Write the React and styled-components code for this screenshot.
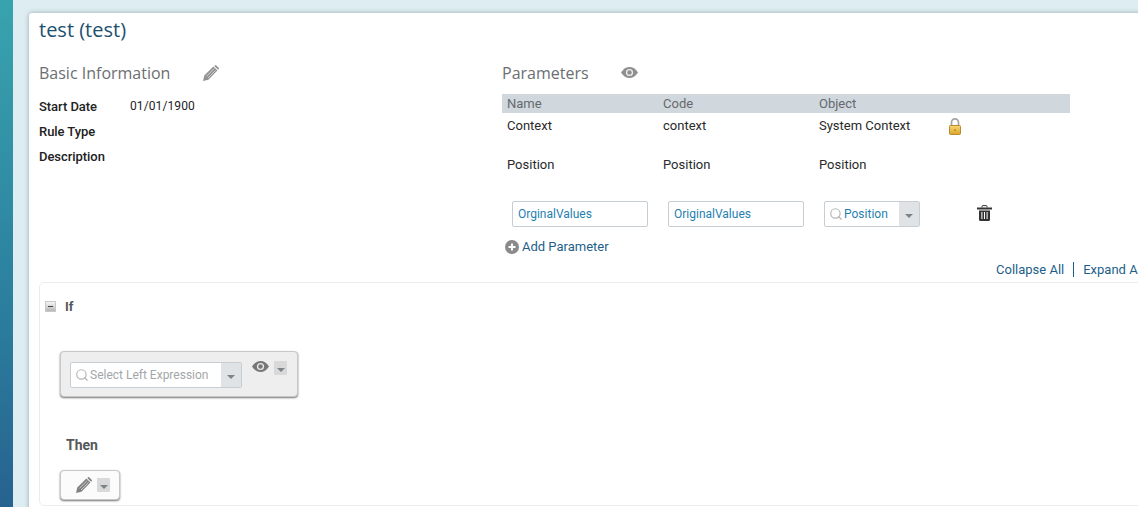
import React from 'react';
import styled, { createGlobalStyle } from 'styled-components';
import { Search } from 'lucide-react';

const GlobalStyle = createGlobalStyle`
  html, body {
    margin: 0;
    padding: 0;
    height: 100%;
    overflow: hidden;
    background: #deedf1;
    font-family: Roboto, "Liberation Sans", sans-serif;
  }
`;

const Page = styled.div`
  display: flex;
  width: 1138px;
  height: 507px;
  overflow: hidden;
`;

const Strip = styled.div`
  flex: 0 0 13px;
  background: linear-gradient(180deg, #38a3ae 0%, #2b7f9e 60%, #27628f 100%);
`;

const Main = styled.div`
  flex: 0 0 1180px;
  padding: 13px 0 0 16px;
`;

const Card = styled.div`
  background: #fff;
  border-radius: 3px 0 0 0;
  box-shadow: 0 0 5px rgba(60, 90, 100, 0.45);
  padding: 4px 0 0 10px;
  height: 520px;
  box-sizing: border-box;
`;

const Title = styled.h1`
  margin: 0;
  font: 400 20px/25px "Open Sans", sans-serif;
  color: #20506f;
`;

const Columns = styled.div`
  display: flex;
  margin-top: 20px;
  height: 199px;
`;

const LeftCol = styled.div`
  flex: 0 0 463px;
`;

const RightCol = styled.div`
  flex: 0 0 568px;
`;

const SectionHead = styled.div`
  display: flex;
  align-items: center;
  height: 22px;
  gap: ${(p) => p.$gap}px;
`;

const SectionTitle = styled.h2`
  margin: 0;
  font: 400 16px/22px "Open Sans", sans-serif;
  color: #6b6f73;
`;

const RaisedIcon = styled.span`
  display: block;
  margin-top: -2px;
`;

const InfoList = styled.div`
  display: flex;
  flex-direction: column;
  margin-top: 15px;
`;

const InfoRow = styled.div`
  display: flex;
  height: 25px;
  font-size: 13px;
  line-height: 15px;
  letter-spacing: -0.05px;
  color: #222;
`;

const InfoLabel = styled.div`
  flex: 0 0 91px;
  font-weight: 500;
`;

const InfoValue = styled.div`
  font-size: 12px;
  letter-spacing: 0.1px;
`;

const ParamGrid = styled.div`
  display: grid;
  grid-template-columns: 156px 156px 128px 1fr;
`;

const HeadCell = styled.div`
  background: #d0d7dd;
  height: 19px;
  margin-top: 10px;
  padding-left: 5px;
  font-size: 13px;
  line-height: 19px;
  color: #66696c;
`;

const Cell = styled.div`
  height: ${(p) => p.$height}px;
  padding-left: 5px;
  font-size: 13px;
  line-height: 26px;
  color: #2a2a2a;
`;

const LockWrap = styled.div`
  padding: 5px 0 0 1px;
`;

const EditRow = styled.div`
  display: flex;
  align-items: center;
  margin-top: 10px;
  padding-left: 10px;
`;

const TextBox = styled.div`
  box-sizing: border-box;
  width: 136px;
  height: 26px;
  margin-right: 20px;
  padding-left: 5px;
  border: 1px solid #c6ced3;
  border-radius: 2px;
  font-size: 12px;
  line-height: 24px;
  color: #1f7fb0;
`;

const Combo = styled.div`
  box-sizing: border-box;
  display: flex;
  align-items: center;
  width: ${(p) => p.$width}px;
  height: 26px;
  padding-left: 4px;
  gap: 1px;
  background: #fff;
  border: 1px solid #c6ced3;
  border-radius: 2px;
  font-size: 12px;
  color: ${(p) => (p.$muted ? '#a3a6a8' : '#1f7fb0')};
`;

const ComboText = styled.span`
  flex: 1;
  white-space: nowrap;
`;

const ComboArrow = styled.span`
  flex: 0 0 20px;
  align-self: stretch;
  display: flex;
  align-items: center;
  justify-content: center;
  background: #dfe3e6;
`;

const Caret = styled.i`
  display: block;
  margin-top: 3px;
  border: 4px solid transparent;
  border-bottom: 0;
  border-top-color: #7d8488;
`;

const TrashWrap = styled.span`
  display: flex;
  margin-left: 57px;
  margin-top: -2px;
`;

const AddLink = styled.div`
  display: flex;
  align-items: center;
  gap: 3px;
  margin: 11px 0 0 3px;
  font-size: 13px;
  line-height: 18px;
  color: #1d5f8a;
`;

const LinksRow = styled.div`
  display: flex;
  align-items: center;
  height: 16px;
  margin-left: 957px;
  font-size: 13px;
  color: #1d5f8a;
  white-space: nowrap;
`;

const LinkSep = styled.span`
  width: 1px;
  height: 15px;
  margin: 0 9px 0 9px;
  background: #1d5f8a;
`;

const RulePanel = styled.div`
  box-sizing: border-box;
  height: 224px;
  margin-top: 5px;
  padding: 16px 0 0 5px;
  border: 1px solid #ebeded;
  border-radius: 5px;
`;

const RuleHead = styled.div`
  display: flex;
  align-items: center;
  gap: 9px;
  height: 15px;
  font-size: 13px;
  font-weight: 700;
  color: #55585a;
`;

const Toggle = styled.span`
  box-sizing: border-box;
  width: 11px;
  height: 11px;
  display: flex;
  align-items: center;
  justify-content: center;
  border: 1px solid #c9c9c9;
  background: linear-gradient(180deg, #f6f6f6, #b5b5b5);
  &::after {
    content: '';
    width: 5px;
    height: 1px;
    background: #444;
  }
`;

const ConditionBox = styled.div`
  box-sizing: border-box;
  display: flex;
  width: 238px;
  height: 46px;
  margin: 37px 0 0 15px;
  padding: 10px 9px;
  gap: 10px;
  background: #eeeeee;
  border: 1px solid #c8c8c8;
  border-radius: 4px;
  box-shadow: 0 1px 2px rgba(0, 0, 0, 0.55);
`;

const ActionIcons = styled.div`
  display: flex;
  align-items: flex-start;
  gap: 5px;
  margin-top: -1px;
`;

const SmallDrop = styled.span`
  width: 13px;
  height: 14px;
  display: flex;
  align-items: center;
  justify-content: center;
  background: #d9d9d9;
  border-radius: 1px;
`;

const ThenLabel = styled.div`
  margin: 40px 0 0 21px;
  font-size: 14px;
  line-height: 16px;
  font-weight: 700;
  color: #55585a;
`;

const ActionBox = styled.div`
  box-sizing: border-box;
  display: flex;
  align-items: center;
  justify-content: flex-end;
  gap: 5px;
  width: 60px;
  height: 30px;
  margin: 17px 0 0 15px;
  padding-right: 9px;
  background: #fbfbfb;
  border: 1px solid #c8c8c8;
  border-radius: 4px;
  box-shadow: 0 1px 2px rgba(0, 0, 0, 0.55);
`;

const LockIcon = () => (
  <svg width="14" height="17" viewBox="0 0 14 17" style={{ display: 'block' }}>
    <defs>
      <linearGradient id="lockBody" x1="0" y1="0" x2="0" y2="1">
        <stop offset="0" stopColor="#f7d774" />
        <stop offset="1" stopColor="#dba52c" />
      </linearGradient>
    </defs>
    <path d="M3.5 8V4.4a3.5 3.5 0 0 1 7 0V8" fill="none" stroke="#a4a4a4" strokeWidth="1.7" />
    <rect x="1.5" y="7.5" width="11" height="9" rx="1" fill="url(#lockBody)" stroke="#b98a2a" />
    <circle cx="7" cy="12" r="0.8" fill="#8a6414" />
  </svg>
);

const PlusIcon = () => (
  <svg width="14" height="14" viewBox="0 0 14 14" style={{ display: 'block' }}>
    <circle cx="7" cy="7" r="7" fill="#8a8a8a" />
    <path d="M3.5 7h7M7 3.5v7" stroke="#fff" strokeWidth="2" />
  </svg>
);

const EyeIcon = ({ color }) => (
  <svg width="17" height="11" viewBox="0 0 17 11" style={{ display: 'block' }}>
    <path d="M0 5.5C2.5 1.8 5.3 0 8.5 0S14.5 1.8 17 5.5C14.5 9.2 11.7 11 8.5 11S2.5 9.2 0 5.5Z" fill={color} />
    <circle cx="8.5" cy="5.5" r="3.6" fill="#fff" fillOpacity="0.85" />
    <circle cx="8.5" cy="5.5" r="2.2" fill={color} />
  </svg>
);

const PencilIcon = ({ size, color }) => (
  <svg width={size} height={size} viewBox="0 0 16 16" style={{ display: 'block' }}>
    <path d="M0 16L1.3 10.6L10.4 1.6L14.4 5.6L5.4 14.7Z" fill={color} />
    <path d="M11.3 0.9L12.1 0.2Q12.6 -0.1 13.1 0.2L15.8 2.9Q16.1 3.4 15.8 3.9L15.1 4.7Z" fill={color} />
    <path d="M3.4 11.4L11.1 3.7M5 13L12.6 5.3" stroke="#ececec" strokeWidth="0.7" />
  </svg>
);

const TrashIcon = () => (
  <svg width="15" height="16" viewBox="0 0 15 16" style={{ display: 'block' }}>
    <path d="M5 2.5V1.4Q5 .6 5.8 .6H9.2Q10 .6 10 1.4V2.5" fill="none" stroke="#333" />
    <rect x="0" y="2.5" width="15" height="2" fill="#333" />
    <path d="M2 5.5H13V14.5Q13 16 11.5 16H3.5Q2 16 2 14.5Z" fill="#333" />
    <path d="M4.9 7V14M7.5 7V14M10.1 7V14" stroke="#fff" strokeWidth="1" />
  </svg>
);

const params = [
  { name: 'Context', code: 'context', object: 'System Context', locked: true, height: 39 },
  { name: 'Position', code: 'Position', object: 'Position', height: 39 },
];

export default function App() {
  return (
    <>
      <GlobalStyle />
      <Page>
        <Strip />
        <Main>
          <Card>
            <Title>test (test)</Title>
            <Columns>
              <LeftCol>
                <SectionHead $gap={33}>
                  <SectionTitle>Basic Information</SectionTitle>
                  <PencilIcon size={16} color="#939393" />
                </SectionHead>
                <InfoList>
                  <InfoRow>
                    <InfoLabel>Start Date</InfoLabel>
                    <InfoValue>01/01/1900</InfoValue>
                  </InfoRow>
                  <InfoRow><InfoLabel>Rule Type</InfoLabel></InfoRow>
                  <InfoRow><InfoLabel>Description</InfoLabel></InfoRow>
                </InfoList>
              </LeftCol>
              <RightCol>
                <SectionHead $gap={32}>
                  <SectionTitle>Parameters</SectionTitle>
                  <RaisedIcon><EyeIcon color="#8f8f8f" /></RaisedIcon>
                </SectionHead>
                <ParamGrid>
                  <HeadCell>Name</HeadCell>
                  <HeadCell>Code</HeadCell>
                  <HeadCell>Object</HeadCell>
                  <HeadCell />
                  {params.map((p) => (
                    <React.Fragment key={p.name}>
                      <Cell $height={p.height}>{p.name}</Cell>
                      <Cell $height={p.height}>{p.code}</Cell>
                      <Cell $height={p.height}>{p.object}</Cell>
                      <Cell $height={p.height}>{p.locked && <LockWrap><LockIcon /></LockWrap>}</Cell>
                    </React.Fragment>
                  ))}
                </ParamGrid>
                <EditRow>
                  <TextBox>OrginalValues</TextBox>
                  <TextBox>OriginalValues</TextBox>
                  <Combo $width={96}>
                    <Search size={14} color="#b5b5b5" />
                    <ComboText>Position</ComboText>
                    <ComboArrow><Caret /></ComboArrow>
                  </Combo>
                  <TrashWrap><TrashIcon /></TrashWrap>
                </EditRow>
                <AddLink><PlusIcon />Add Parameter</AddLink>
              </RightCol>
            </Columns>
            <LinksRow>
              Collapse All<LinkSep />Expand All
            </LinksRow>
            <RulePanel>
              <RuleHead><Toggle />If</RuleHead>
              <ConditionBox>
                <Combo $width={172} $muted>
                  <Search size={14} color="#b5b5b5" />
                  <ComboText>Select Left Expression</ComboText>
                  <ComboArrow><Caret /></ComboArrow>
                </Combo>
                <ActionIcons>
                  <EyeIcon color="#777" />
                  <SmallDrop><Caret /></SmallDrop>
                </ActionIcons>
              </ConditionBox>
              <ThenLabel>Then</ThenLabel>
              <ActionBox>
                <PencilIcon size={16} color="#808080" />
                <SmallDrop><Caret /></SmallDrop>
              </ActionBox>
            </RulePanel>
          </Card>
        </Main>
      </Page>
    </>
  );
}
